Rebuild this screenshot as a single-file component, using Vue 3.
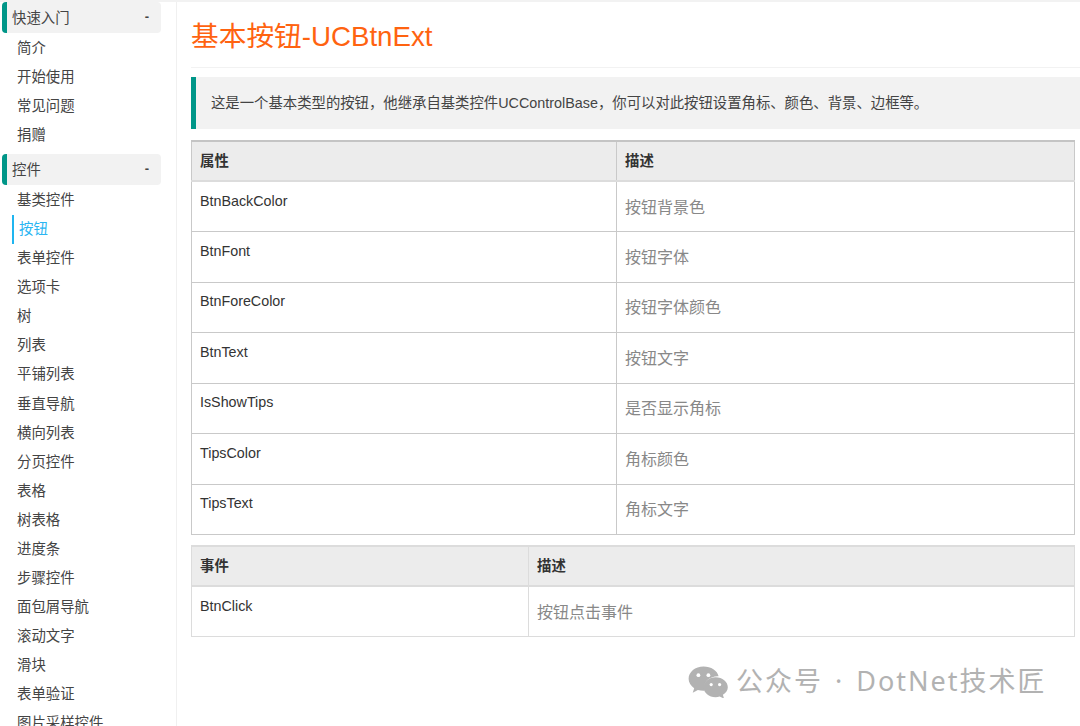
<template>
  <div class="page">
    <aside class="sidebar">
      <div v-for="group in menu" :key="group.title" class="menu-group">
        <div class="group-title">
          <span>{{ group.title }}</span>
          <span class="toggle">-</span>
        </div>
        <a
          v-for="item in group.items"
          :key="item"
          class="menu-item"
          :class="{ active: item === '按钮' }"
        >{{ item }}</a>
      </div>
    </aside>

    <main class="content">
      <h1 class="title">基本按钮-UCBtnExt</h1>
      <blockquote class="note">这是一个基本类型的按钮，他继承自基类控件UCControlBase，你可以对此按钮设置角标、颜色、背景、边框等。</blockquote>

      <table class="doc-table props">
        <thead>
          <tr><th>属性</th><th>描述</th></tr>
        </thead>
        <tbody>
          <tr v-for="row in props" :key="row[0]">
            <td class="name">{{ row[0] }}</td>
            <td class="desc">{{ row[1] }}</td>
          </tr>
        </tbody>
      </table>

      <table class="doc-table events">
        <thead>
          <tr><th>事件</th><th>描述</th></tr>
        </thead>
        <tbody>
          <tr>
            <td class="name">BtnClick</td>
            <td class="desc">按钮点击事件</td>
          </tr>
        </tbody>
      </table>
    </main>

    <div class="watermark">
      <svg class="wechat" viewBox="0 0 40 32" width="40" height="32">
        <path d="M15.5 0.5C7.2 0.5 0.6 6 0.6 12.8c0 3.9 2.2 7.2 5.6 9.5l-1.5 4.4 5.2-2.8c1.8.5 3.6.8 5.5.8h1.2c-.3-1-.5-2.1-.5-3.2 0-6.3 6-11.3 13.5-11.3h1C29.4 4.6 23 .5 15.5.5z" fill="#b2b2b2" />
        <circle cx="10.4" cy="9.2" r="1.9" fill="#fff" />
        <circle cx="20.4" cy="9.2" r="1.9" fill="#fff" />
        <path d="M27.6 11.2c-6.7 0-12 4.5-12 10s5.3 10 12 10c1.4 0 2.8-.2 4-.6l4.4 1.9-1.1-3.7c3-1.9 4.9-4.6 4.9-7.6 0-5.5-5.4-10-12.2-10z" fill="#b2b2b2" />
        <circle cx="23.2" cy="18.6" r="1.6" fill="#fff" />
        <circle cx="31.6" cy="18.6" r="1.6" fill="#fff" />
      </svg>
      <span class="wm-text">公众号 · DotNet技术匠</span>
    </div>
  </div>
</template>

<script setup>
const menu = [
  { title: '快速入门', items: ['简介', '开始使用', '常见问题', '捐赠'] },
  {
    title: '控件',
    items: [
      '基类控件', '按钮', '表单控件', '选项卡', '树', '列表', '平铺列表', '垂直导航',
      '横向列表', '分页控件', '表格', '树表格', '进度条', '步骤控件', '面包屑导航',
      '滚动文字', '滑块', '表单验证', '图片采样控件'
    ]
  }
]

const props = [
  ['BtnBackColor', '按钮背景色'],
  ['BtnFont', '按钮字体'],
  ['BtnForeColor', '按钮字体颜色'],
  ['BtnText', '按钮文字'],
  ['IsShowTips', '是否显示角标'],
  ['TipsColor', '角标颜色'],
  ['TipsText', '角标文字']
]
</script>

<style>
html, body {
  margin: 0;
  height: 100%;
  overflow: hidden;
  background: #fff;
}
</style>

<style scoped>
.page {
  position: relative;
  display: flex;
  width: 1080px;
  height: 726px;
  box-sizing: border-box;
  border-top: 2px solid #f2f2f2;
  overflow: hidden;
  font-family: "Liberation Sans", "Noto Sans CJK SC", sans-serif;
  color: #333;
}

.sidebar {
  flex: none;
  width: 177px;
  box-sizing: border-box;
  border-right: 1px solid #f0f0f0;
  padding: 0 15px 0 2px;
}

.menu-group {
  margin-bottom: 4px;
}

.group-title {
  display: flex;
  justify-content: space-between;
  align-items: center;
  height: 31px;
  margin-bottom: 1px;
  box-sizing: border-box;
  padding: 0 12px 2px 5px;
  border-left: 5px solid #009688;
  border-radius: 4px;
  background: #f2f2f2;
  font-size: 14.4px;
  color: #444;
}

.toggle {
  font-weight: bold;
  font-size: 13px;
}

.menu-item {
  display: block;
  height: 29.05px;
  line-height: 29px;
  padding-left: 15px;
  font-size: 14.4px;
  color: #444;
}

.menu-item.active {
  margin-left: 10px;
  padding-left: 5px;
  border-left: 2px solid #1fb5f0;
  color: #2bb5f2;
}

.content {
  flex: 1;
  min-width: 0;
  padding-left: 14px;
}

.title {
  margin: 0 0 9px;
  padding-top: 9px;
  box-sizing: border-box;
  line-height: 52px;
  height: 66px;
  border-bottom: 1px solid #f2f2f2;
  font-size: 27.7px;
  font-weight: normal;
  color: #ff6310;
}

.note {
  margin: 0 0 11px;
  height: 52px;
  box-sizing: border-box;
  padding-left: 15px;
  line-height: 52px;
  border-left: 5px solid #009688;
  background: #f2f2f2;
  font-size: 14.36px;
  color: #444;
}

.doc-table {
  width: 884px;
  table-layout: fixed;
  border-collapse: collapse;
  margin-bottom: 10px;
  border: 1px solid #c9c9c9;
  border-top: 2px solid #c4c4c4;
}

.doc-table th {
  height: 40px;
  padding: 0 8px 3px;
  box-sizing: border-box;
  background: #ececec;
  border-bottom: 2px solid #dcdcdc;
  border-right: 1px solid #c9c9c9;
  text-align: left;
  font-size: 14.4px;
  font-weight: bold;
  color: #333;
}

.doc-table td {
  height: 50.5px;
  padding: 0 8px;
  box-sizing: border-box;
  border-top: 1px solid #c9c9c9;
  border-right: 1px solid #c9c9c9;
}

.doc-table thead + tbody tr:first-child td {
  border-top: none;
}

.doc-table .name {
  padding-top: 9.5px;
  vertical-align: top;
  line-height: 18px;
  font-size: 14.3px;
  color: #333;
}

.doc-table .desc {
  padding-bottom: 2px;
  font-size: 16px;
  color: #888;
}

.props th:first-child {
  width: 425px;
}

.events th:first-child {
  width: 337px;
}

.events,
.events th,
.events td {
  border-color: #dcdcdc;
}

.watermark {
  position: absolute;
  left: 688px;
  top: 664px;
  display: flex;
  align-items: center;
  gap: 8px;
  font-family: "Noto Sans", "Noto Sans CJK SC", sans-serif;
  font-size: 27px;
  letter-spacing: 2px;
  word-spacing: 3px;
  line-height: 32px;
  color: #b2b2b2;
  white-space: nowrap;
}

.wm-text {
  margin-top: -2px;
}
</style>
